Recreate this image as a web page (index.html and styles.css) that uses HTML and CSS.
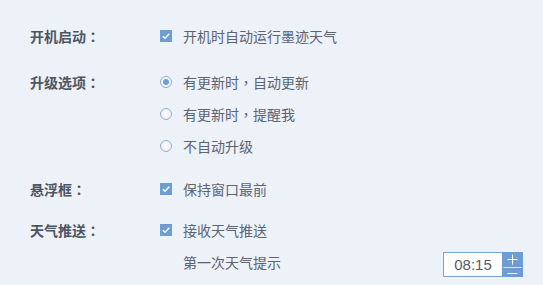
FILE: index.html
```html
<!DOCTYPE html>
<html lang="zh-CN">
<head>
<meta charset="utf-8">
<link rel="stylesheet" href="styles.css">
</head>
<body>
<div class="panel">
  <div class="group g1">
    <div class="label">开机启动<span class="p" lang="zh-TW">：</span></div>
    <div class="opts">
      <div class="row"><span class="check"><svg viewBox="0 0 12 12" width="12" height="12"><path d="M2.8 6.2 L5 8.3 L9.3 3.8" fill="none" stroke="#fff" stroke-width="1.5"/></svg></span><span class="txt">开机时自动运行墨迹天气</span></div>
    </div>
  </div>
  <div class="group g2">
    <div class="label">升级选项<span class="p" lang="zh-TW">：</span></div>
    <div class="opts">
      <div class="row"><span class="radio on"></span><span class="txt">有更新时<span class="p" lang="zh-TW">，</span>自动更新</span></div>
      <div class="row"><span class="radio"></span><span class="txt">有更新时<span class="p" lang="zh-TW">，</span>提醒我</span></div>
      <div class="row"><span class="radio"></span><span class="txt">不自动升级</span></div>
    </div>
  </div>
  <div class="group g3">
    <div class="label">悬浮框<span class="p" lang="zh-TW">：</span></div>
    <div class="opts">
      <div class="row"><span class="check"><svg viewBox="0 0 12 12" width="12" height="12"><path d="M2.8 6.2 L5 8.3 L9.3 3.8" fill="none" stroke="#fff" stroke-width="1.5"/></svg></span><span class="txt">保持窗口最前</span></div>
    </div>
  </div>
  <div class="group g4">
    <div class="label">天气推送<span class="p" lang="zh-TW">：</span></div>
    <div class="opts">
      <div class="row"><span class="check"><svg viewBox="0 0 12 12" width="12" height="12"><path d="M2.8 6.2 L5 8.3 L9.3 3.8" fill="none" stroke="#fff" stroke-width="1.5"/></svg></span><span class="txt">接收天气推送</span></div>
      <div class="row time-row"><span class="txt plain">第一次天气提示</span>
        <div class="timebox"><span class="time">08:15</span><svg class="spin" viewBox="0 0 21 25" width="21" height="25"><rect width="21" height="25" fill="#6e9dd3"/><path d="M5.5 7.5 H15.5 M10.5 2.5 V12.5" stroke="#fff" stroke-width="1"/><path d="M1.5 15.5 H19.5" stroke="#dbe7f6" stroke-width="1"/><path d="M5.5 21.5 H15.5" stroke="#fff" stroke-width="1"/></svg></div>
      </div>
    </div>
  </div>
</div>
</body>
</html>
```
FILE: styles.css
```css
html, body {
  margin: 0;
  padding: 0;
}
body {
  background: #edf1f8;
  width: 543px;
  height: 285px;
  overflow: hidden;
  font-family: "Noto Sans CJK SC", "Noto Sans", sans-serif;
  font-size: 14px;
  color: #5c6371;
}
.panel {
  padding: 20px 20px 0 30px;
}
.group {
  display: grid;
  grid-template-columns: 130px 1fr;
}
.g2 { margin-top: 14px; }
.g3 { margin-top: 11px; }
.g4 { margin-top: 9px; }
.label {
  height: 32px;
  line-height: 32px;
  font-weight: bold;
  color: #4d5563;
}
.p {
  font-family: "Noto Sans CJK TC", "Noto Sans CJK SC", sans-serif;
}
.row {
  height: 32px;
  display: flex;
  align-items: center;
}
.txt {
  margin-left: 11px;
  line-height: 32px;
}
.txt.plain {
  margin-left: 23px;
}
.check {
  width: 12px;
  height: 12px;
  background: #6e9dd3;
  display: block;
}
.check svg { display: block; }
.radio {
  width: 10px;
  height: 10px;
  border: 1px solid #8eaad0;
  border-radius: 50%;
  background: #f6f8fc;
  position: relative;
  display: block;
}
.radio.on::after {
  content: "";
  position: absolute;
  left: 2px;
  top: 2px;
  width: 6px;
  height: 6px;
  border-radius: 50%;
  background: #6e9dd3;
}
.time-row {
  justify-content: space-between;
}
.timebox {
  display: flex;
  height: 25px;
  margin-top: 5px;
}
.time {
  width: 58px;
  height: 23px;
  border: 1px solid #7fa2cc;
  border-right: none;
  background: #fff;
  font-family: "Liberation Sans", sans-serif;
  font-size: 15px;
  line-height: 23px;
  text-align: center;
  color: #555b66;
}
.spin {
  display: block;
}
```
